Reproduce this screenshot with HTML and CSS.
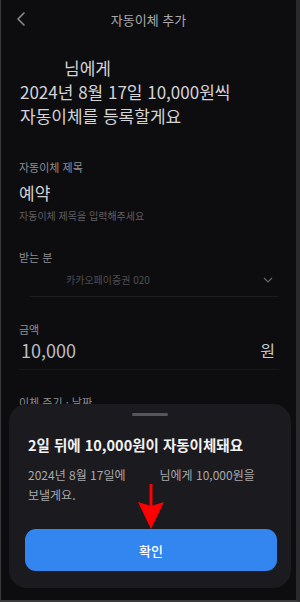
FILE: index.html
```html
<!DOCTYPE html>
<html lang="ko">
<head>
  <meta charset="UTF-8">
  <meta name="viewport" content="width=device-width, initial-scale=1.0">
  <title>자동이체 추가</title>
  <link rel="stylesheet" href="styles.css">
</head>
<body>
  <div class="screen">
    <div class="header">
      <svg class="back" width="10" height="16" viewBox="0 0 10 16">
        <path d="M8 2 L2 8 L8 14" fill="none" stroke="#8a8a8e" stroke-width="1.6" stroke-linecap="round" stroke-linejoin="round"/>
      </svg>
      <div class="title">자동이체 추가</div>
    </div>

    <div class="summary">
      <div class="line name">님에게</div>
      <div class="line">2024년 8월 17일 10,000원씩</div>
      <div class="line">자동이체를 등록할게요</div>
    </div>

    <div class="field field-title">
      <div class="label">자동이체 제목</div>
      <div class="value">예약</div>
      <div class="hint">자동이체 제목을 입력해주세요</div>
    </div>

    <div class="field field-to">
      <div class="label">받는 분</div>
      <div class="select">
        <span class="account">카카오페이증권 020</span>
        <svg width="10" height="6" viewBox="0 0 10 6">
          <path d="M1 1 L5 5 L9 1" fill="none" stroke="#666" stroke-width="1.2"/>
        </svg>
      </div>
    </div>

    <div class="field field-amount">
      <div class="label">금액</div>
      <div class="amount">
        <span class="num">10,000</span>
        <span class="unit">원</span>
      </div>
    </div>

    <div class="field field-cycle">
      <div class="label">이체 주기 · 날짜</div>
    </div>

    <div class="sheet">
      <div class="handle"></div>
      <div class="sheet-title">2일 뒤에 10,000원이 자동이체돼요</div>
      <div class="sheet-text">
        <div>2024년 8월 17일에<span class="gap"></span>님에게 10,000원을</div>
        <div>보낼게요.</div>
      </div>
      <button class="confirm">확인</button>
    </div>

    <svg class="arrow" width="30" height="46" viewBox="0 0 30 46">
      <path d="M15 0 L15 24" stroke="#f00" stroke-width="3"/>
      <path d="M2 18 L15 22 L28 18 L15 45 Z" fill="#f00"/>
    </svg>
  </div>
</body>
</html>
```

FILE: styles.css
```css
* {
  box-sizing: border-box;
}
body {
  margin: 0;
  background: #0d0d10;
  font-family: "Noto Sans CJK KR", "Noto Sans", sans-serif;
}
.screen {
  position: relative;
  width: 300px;
  height: 602px;
  overflow: hidden;
  background: #0d0d10;
  border-left: 1px solid #3a3a3c;
  border-right: 4px solid #2a2a2d;
  border-bottom: 2px solid #3a3a3c;
}
.header {
  position: relative;
  height: 38px;
  display: flex;
  align-items: center;
  justify-content: center;
}
.back {
  position: absolute;
  left: 15px;
  top: 11px;
}
.title {
  color: #a9a9ad;
  font-size: 13px;
}
.summary {
  padding: 18px 19px 0;
}
.summary .line {
  color: #d4d4d8;
  font-size: 17px;
  line-height: 24px;
}
.summary .name {
  padding-left: 44px;
}
.field {
  padding: 0 18px;
}
.label {
  color: #8e8e93;
  font-size: 11px;
}
.field-title .label {
  margin-top: 31px;
}
.field-to .label {
  margin-top: 26px;
}
.field-amount .label {
  margin-top: 24px;
}
.field-cycle .label {
  margin-top: 24px;
}
.value {
  color: #d0d0d4;
  font-size: 17px;
  margin-top: 5px;
}
.hint {
  color: #5e5e63;
  font-size: 10px;
  margin-top: 3px;
}
.select {
  display: flex;
  align-items: center;
  justify-content: space-between;
  margin-left: 10px;
  padding: 7px 5px 9px 37px;
  border-bottom: 1px solid #1c1c1f;
}
.account {
  color: #4e4e53;
  font-size: 10px;
}
.amount {
  display: flex;
  justify-content: space-between;
  align-items: center;
  padding: 0 3px 6px 2px;
  border-bottom: 1px solid #17171a;
}
.num {
  color: #bdbdc1;
  font-size: 18px;
}
.unit {
  color: #c8c8cc;
  font-size: 16px;
}
.sheet {
  position: absolute;
  left: 8px;
  right: 5px;
  top: 404px;
  height: 184px;
  background: #1b1b1f;
  border-radius: 18px;
  padding: 9px 15px 0;
}
.handle {
  width: 36px;
  height: 3px;
  border-radius: 2px;
  background: #55555a;
  margin: 0 auto;
}
.sheet-title {
  color: #f2f2f4;
  font-size: 14.5px;
  font-weight: 600;
  margin: 18px 0 0 4px;
}
.sheet-text {
  color: #a8a8ad;
  font-size: 12px;
  line-height: 20px;
  margin: 10px 0 0 4px;
}
.gap {
  display: inline-block;
  width: 34px;
}
.confirm {
  display: block;
  width: 252px;
  height: 42px;
  margin: 24px 0 0 1px;
  border: none;
  border-radius: 11px;
  background: #3385f0;
  color: #fff;
  font-family: inherit;
  font-size: 13px;
  font-weight: 500;
}
.arrow {
  position: absolute;
  left: 135px;
  top: 484px;
}
```
